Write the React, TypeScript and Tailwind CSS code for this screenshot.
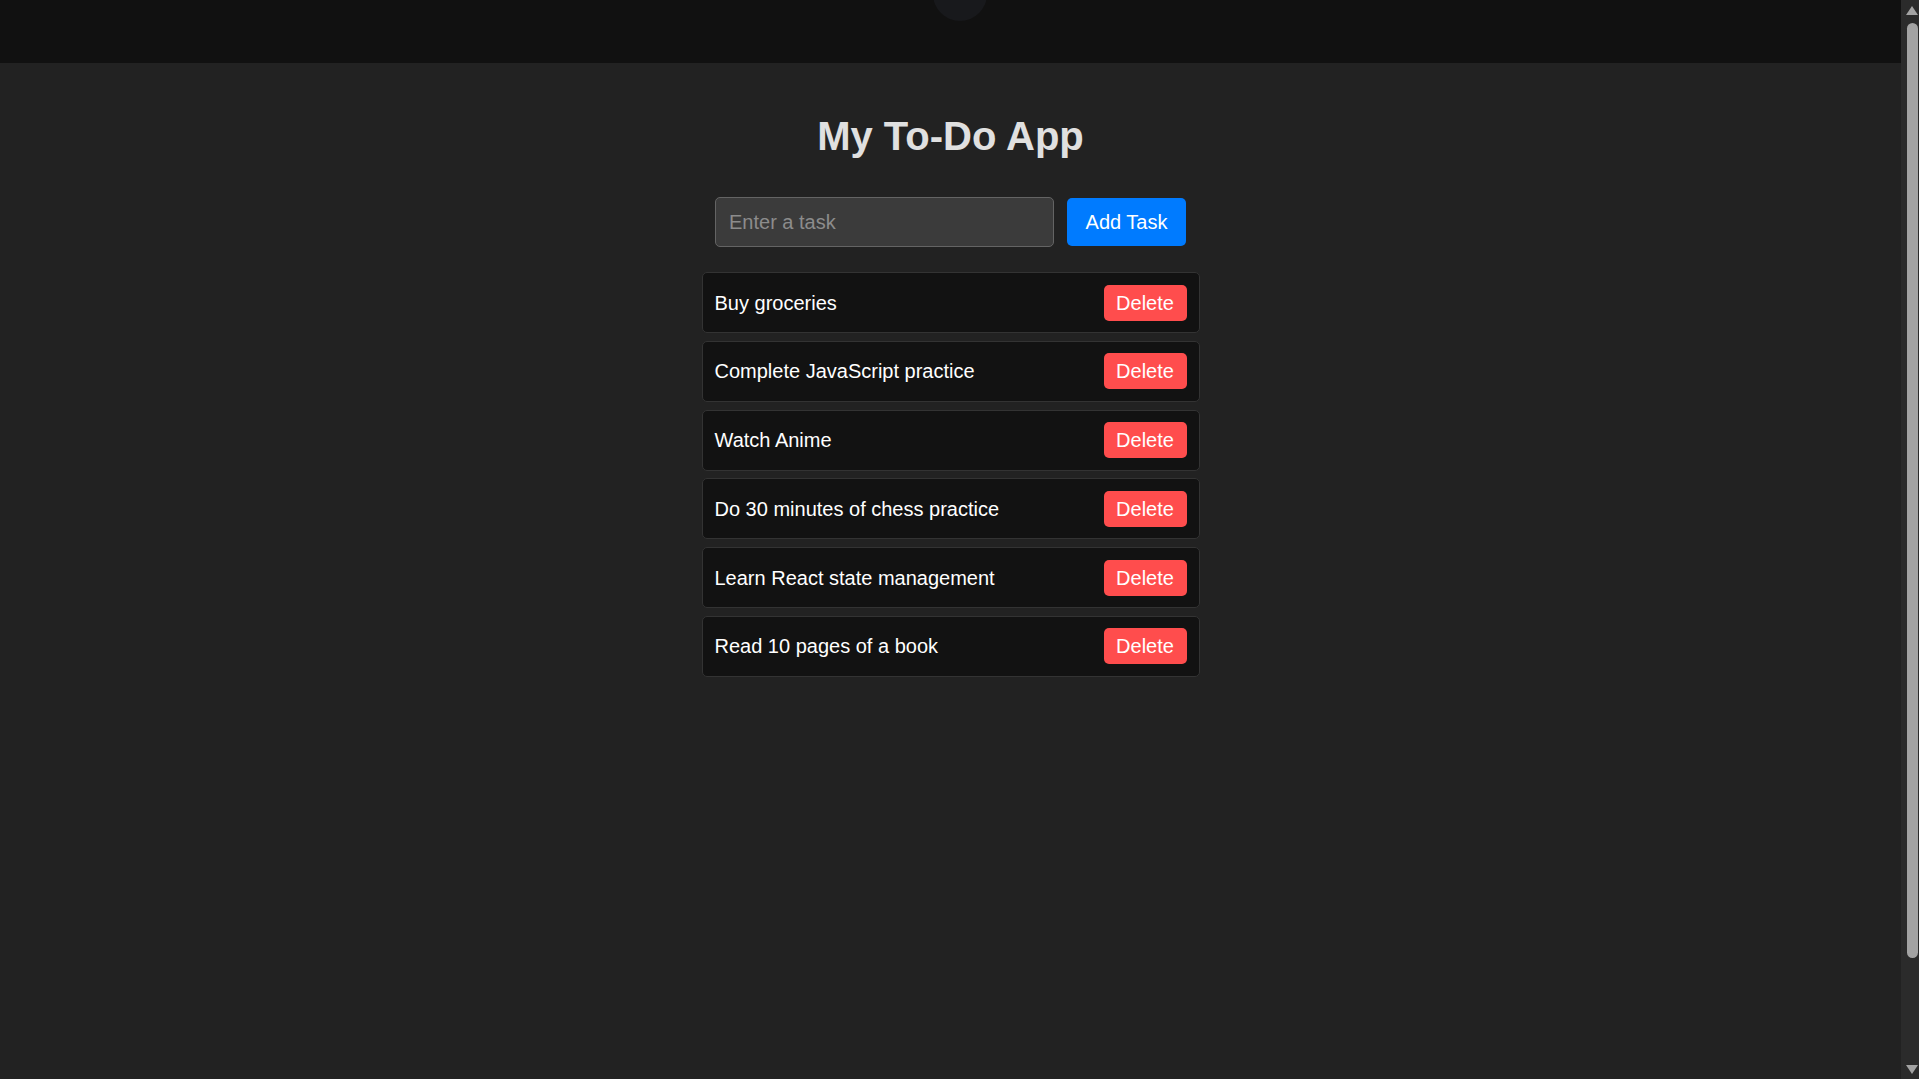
import React, { useState } from 'react';

const INITIAL_TASKS = [
  'Buy groceries',
  'Complete JavaScript practice',
  'Watch Anime',
  'Do 30 minutes of chess practice',
  'Learn React state management',
  'Read 10 pages of a book',
];

const App: React.FC = () => {
  const [tasks, setTasks] = useState<string[]>(INITIAL_TASKS);
  const [input, setInput] = useState('');

  const addTask = () => {
    if (!input.trim()) return;
    setTasks(prev => [...prev, input.trim()]);
    setInput('');
  };

  const removeTask = (index: number) => {
    setTasks(prev => prev.filter((_, i) => i !== index));
  };

  return (
    <div className="flex h-screen w-full overflow-hidden bg-[#222222] font-['Liberation_Sans',Arial,sans-serif]">
      <div className="flex-1 flex flex-col">
        {/* Top bar */}
        <header className="relative h-[63px] shrink-0 bg-[#111111]">
          <div className="absolute left-[933px] top-[-33px] w-[54px] h-[54px] rounded-full bg-[#18191c]" />
        </header>

        <main className="flex flex-col items-center pt-[50px]">
          <h1 className="text-[40px] leading-[46px] font-bold text-[#e0e0e0]">My To-Do App</h1>

          <div className="flex items-center gap-[13px] mt-[38px]">
            <input
              type="text"
              value={input}
              onChange={e => setInput(e.target.value)}
              onKeyDown={e => e.key === 'Enter' && addTask()}
              placeholder="Enter a task"
              className="w-[339px] h-[50px] px-[13px] text-[20px] text-white bg-[#3b3b3b] border border-[#646464] rounded-[5px] outline-none placeholder:text-[#8c8c8c]"
            />
            <button
              onClick={addTask}
              className="w-[119px] h-[48px] text-[20px] text-white bg-[#007bff] rounded-[5px]"
            >
              Add Task
            </button>
          </div>

          <ul className="w-[498px] mt-[25px] flex flex-col gap-[7.8px]">
            {tasks.map((task, i) => (
              <li
                key={i}
                className="h-[61px] flex items-center justify-between pl-[12px] pr-[12px] bg-[#121212] border border-[#333333] rounded-[5px]"
              >
                <span className="text-[20px] text-white">{task}</span>
                <button
                  onClick={() => removeTask(i)}
                  className="w-[83px] h-[36px] text-[20px] text-white bg-[#ff4d4d] rounded-[5px]"
                >
                  Delete
                </button>
              </li>
            ))}
          </ul>
        </main>
      </div>

      {/* Scrollbar */}
      <div className="w-[18px] h-full shrink-0 bg-[#2b2b2b] flex flex-col items-center">
        <svg width="12" height="10" viewBox="0 0 12 10" className="mt-[6px] ml-[4px]">
          <polygon points="6,0 12,9 0,9" fill="#a3a3a3" />
        </svg>
        <div className="w-[11px] h-[935px] mt-[7px] ml-[4px] rounded-t-[6px] rounded-b-[6px] bg-[#a3a3a3]" />
        <div className="flex-1" />
        <svg width="12" height="10" viewBox="0 0 12 10" className="mb-[4px] ml-[4px]">
          <polygon points="0,0 12,0 6,9" fill="#a3a3a3" />
        </svg>
      </div>
    </div>
  );
};

export default App;
